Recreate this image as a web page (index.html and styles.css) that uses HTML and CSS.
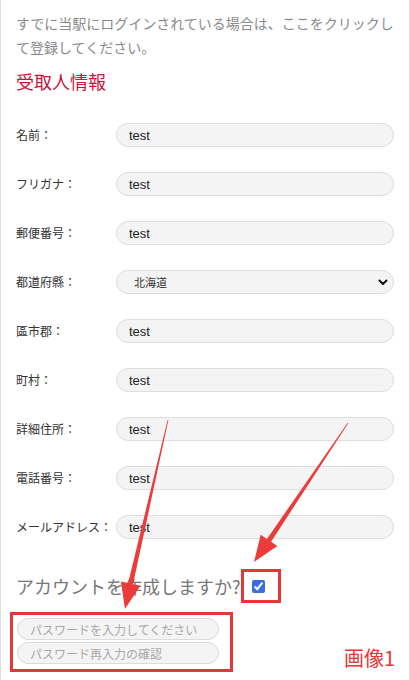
FILE: index.html
```html
<!DOCTYPE html>
<html lang="ja">
<head>
<meta charset="utf-8">
<link rel="stylesheet" href="styles.css">
</head>
<body>
<div class="page">
  <p class="intro">すでに当駅にログインされている場合は、ここをクリックして登録してください。</p>
  <h2 class="title">受取人情報</h2>
  <div class="form">
    <label class="lbl">名前：</label><input class="field" value="test">
    <label class="lbl">フリガナ：</label><input class="field" value="test">
    <label class="lbl">郵便番号：</label><input class="field" value="test">
    <label class="lbl">都道府縣：</label>
    <div class="selwrap">
      <select class="field sel"><option>北海道</option></select>
      <svg class="chev" width="10" height="7" viewBox="0 0 10 7"><path d="M1.5 1.5 L5 5 L8.5 1.5" fill="none" stroke="#111" stroke-width="2" stroke-linecap="round" stroke-linejoin="round"/></svg>
    </div>
    <label class="lbl">區市郡：</label><input class="field" value="test">
    <label class="lbl">町村：</label><input class="field" value="test">
    <label class="lbl">詳細住所：</label><input class="field" value="test">
    <label class="lbl">電話番号：</label><input class="field" value="test">
    <label class="lbl">メールアドレス：</label><input class="field" value="test">
  </div>
  <div class="account">
    <span class="acc-text">アカウントを作成しますか?</span>
    <span class="redbox chkbox"><input type="checkbox" class="chk" checked></span>
  </div>
  <div class="bottom">
    <div class="redbox pwbox">
      <input class="pw" placeholder="パスワードを入力してください">
      <input class="pw" placeholder="パスワード再入力の確認">
    </div>
    <span class="note">画像1</span>
  </div>
  <svg class="arrows" width="410" height="680" viewBox="0 0 410 680">
    <polygon fill="#ec3b3b" points="166.6,419.9 127.2,583.0 119.9,581.4 124,609 139.3,585.8 132.0,584.2 167.4,420.1"/>
    <polygon fill="#ec3b3b" points="346.7,422.8 265.9,538.9 259.7,534.7 253,562 276.3,545.9 270.1,541.7 347.3,423.2"/>
  </svg>
</div>
</body>
</html>
```
FILE: styles.css
```css
* { box-sizing: border-box; }
html, body { margin: 0; padding: 0; background: #fff; }
body { font-family: "Noto Sans CJK JP", "Liberation Sans", sans-serif; }
.page {
  position: relative;
  width: 410px;
  height: 680px;
  overflow: hidden;
  border-left: 1px solid #dcdcdc;
  border-right: 1px solid #dcdcdc;
  padding: 11px 15px 0 15px;
}
.intro {
  margin: 0;
  font-size: 14px;
  line-height: 24px;
  color: #8a8a8a;
}
.title {
  margin: 10px 0 0;
  font-size: 18px;
  line-height: 24px;
  font-weight: normal;
  color: #c8143c;
}
.form {
  margin-top: 30px;
  display: grid;
  grid-template-columns: 100px 1fr;
  grid-auto-rows: 24px;
  row-gap: 25px;
  align-items: center;
}
.lbl {
  font-size: 12px;
  color: #333;
  line-height: 24px;
  height: 24px;
  white-space: nowrap;
}
.field {
  width: 100%;
  height: 24px;
  margin: 0;
  border: 1px solid #dedede;
  border-radius: 12px;
  background: #f4f4f4;
  padding: 0 0 0 12px;
  font-family: "Liberation Sans", Arial, sans-serif;
  font-size: 13px;
  color: #222;
  outline: none;
  display: block;
}
.selwrap { position: relative; height: 24px; }
.sel {
  appearance: none;
  -webkit-appearance: none;
  padding-left: 17px;
  font-family: "Noto Sans CJK JP", sans-serif;
  font-size: 11px;
  color: #333;
}
.chev { position: absolute; right: 6px; top: 9px; }
.account {
  margin-top: 30px;
  display: flex;
  align-items: center;
  height: 34px;
}
.acc-text {
  font-size: 18px;
  color: #777;
  line-height: 34px;
}
.redbox { border: 3px solid #e43838; }
.chkbox {
  margin-left: 0;
  width: 40px;
  height: 34px;
  display: flex;
  align-items: center;
  padding-left: 8px;
}
.chk {
  margin: 0;
  width: 13px;
  height: 13px;
  accent-color: #3a6ee0;
}
.bottom {
  margin-top: 9px;
  margin-left: -6px;
  display: flex;
  justify-content: space-between;
  align-items: flex-end;
}
.pwbox {
  width: 223px;
  height: 60px;
  padding: 3px 0 0 4px;
  display: flex;
  flex-direction: column;
  gap: 2px;
}
.pw {
  width: 202px;
  height: 22px;
  margin: 0;
  border: 1px solid #dcdcdc;
  border-radius: 11px;
  background: #f4f4f4;
  padding: 0 0 0 12px;
  font-family: "Noto Sans CJK JP", sans-serif;
  font-size: 12px;
  outline: none;
}
.pw::placeholder { color: #a8a8a8; }
.note {
  font-size: 20px;
  color: #e43838;
  line-height: 24px;
  margin-bottom: 2px;
  margin-right: -1px;
}
.arrows { position: absolute; left: 0; top: 0; pointer-events: none; }
```
